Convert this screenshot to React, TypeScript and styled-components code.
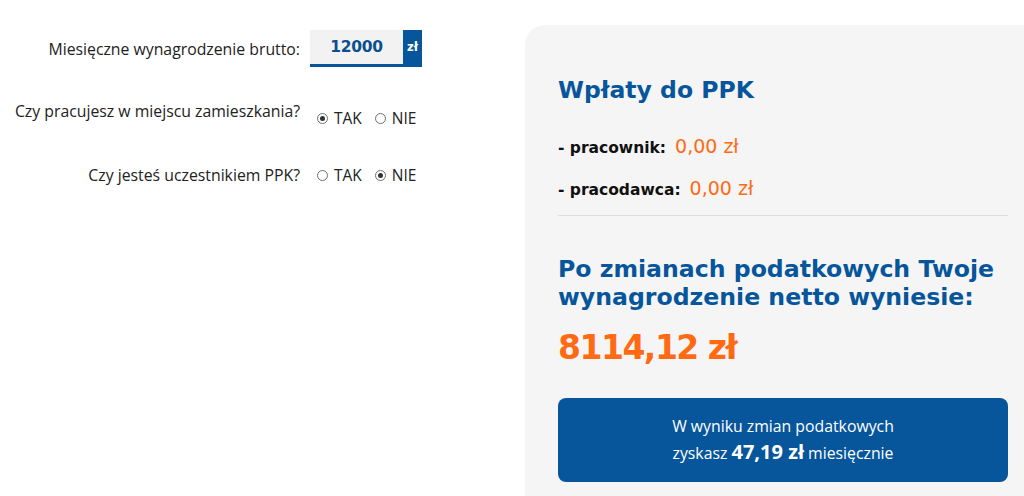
import { FunctionComponent } from "react"
import styled, { createGlobalStyle } from "styled-components"

const BLUE = "#07559b"
const ORANGE = "#ff6a13"
const HEAD_FONT = `"DejaVu Sans", "Noto Sans", sans-serif`
const BODY_FONT = `"Open Sans", "Noto Sans", sans-serif`

const GlobalStyle = createGlobalStyle`
  html, body {
    margin: 0;
    padding: 0;
    background: #ffffff;
    overflow: hidden;
  }
  body {
    font-family: ${BODY_FONT};
    color: #222;
  }
`

const StyledPage = styled.div`
  display: flex;
  width: 1024px;
  height: 496px;
  box-sizing: border-box;
  padding-top: 25px;
`

const StyledForm = styled.div`
  width: 525px;
  flex-shrink: 0;
  display: flex;
  flex-direction: column;
  padding-top: 5px;
`

const StyledRow = styled.div<{ $mt: number }>`
  display: flex;
  align-items: center;
  margin-top: ${(p) => p.$mt}px;
`

const StyledLabel = styled.div<{ $lift?: number }>`
  width: 300px;
  text-align: right;
  font-size: 15.8px;
  line-height: 24px;
  color: #222;
  padding-bottom: ${(p) => (p.$lift ? p.$lift * 2 : 0)}px;
`

const StyledInputWrap = styled.div`
  display: flex;
  margin-left: 10px;
  height: 37px;
  box-sizing: border-box;
  border-bottom: 3px solid ${BLUE};
`

const StyledInputValue = styled.div`
  width: 93px;
  background: #f2f2f2;
  display: flex;
  align-items: center;
  justify-content: center;
  font-family: ${HEAD_FONT};
  font-weight: 700;
  font-size: 15.5px;
  color: #0b4f8e;
  letter-spacing: -0.3px;
`

const StyledCurrency = styled.div`
  width: 19px;
  background: ${BLUE};
  color: #fff;
  display: flex;
  align-items: center;
  justify-content: center;
  font-family: ${HEAD_FONT};
  font-weight: 700;
  font-size: 11.5px;
`

const StyledRadioGroup = styled.div`
  display: flex;
  align-items: center;
  margin-left: 17px;
  gap: 13px;
`

const StyledRadioOption = styled.label`
  display: flex;
  align-items: center;
  gap: 6px;
  font-size: 15.5px;
  line-height: 24px;
  color: #222;
`

const StyledRadioDot = styled.span<{ $checked: boolean }>`
  width: 11px;
  height: 11px;
  box-sizing: border-box;
  border-radius: 50%;
  border: 1px solid #6f6f6f;
  background: #fff;
  display: inline-flex;
  align-items: center;
  justify-content: center;

  &::after {
    content: "";
    width: 5px;
    height: 5px;
    border-radius: 50%;
    background: ${(p) => (p.$checked ? "#333" : "transparent")};
  }
`

const StyledPanel = styled.div`
  flex: 1;
  background: #f5f5f5;
  border-top-left-radius: 20px;
  padding: 50px 16px 0 33px;
  display: flex;
  flex-direction: column;
`

const StyledTitle = styled.h2`
  margin: 0;
  font-family: ${HEAD_FONT};
  font-weight: 700;
  font-size: 23.5px;
  line-height: 30px;
  color: ${BLUE};
`

const StyledContribution = styled.div<{ $mt: number }>`
  margin-top: ${(p) => p.$mt}px;
  display: flex;
  align-items: baseline;
  gap: 9px;
  line-height: 24px;
`

const StyledContributionLabel = styled.span`
  font-family: ${HEAD_FONT};
  font-weight: 700;
  font-size: 15.5px;
  color: #111;
`

const StyledContributionValue = styled.span`
  font-family: ${HEAD_FONT};
  font-weight: 400;
  font-size: 19px;
  color: ${ORANGE};
`

const StyledDivider = styled.hr`
  margin: 13px 0 0;
  border: none;
  border-top: 1px solid #dcdcdc;
`

const StyledResultHeading = styled.h2`
  margin: 39px 0 0;
  font-family: ${HEAD_FONT};
  font-weight: 700;
  font-size: 23.6px;
  line-height: 28px;
  color: ${BLUE};
`

const StyledAmount = styled.div`
  margin-top: 15px;
  font-family: ${HEAD_FONT};
  font-weight: 700;
  font-size: 33px;
  line-height: 44px;
  color: ${ORANGE};
  letter-spacing: -1.5px;
`

const StyledInfoBox = styled.div`
  margin-top: 28px;
  background: ${BLUE};
  border-radius: 8px;
  padding: 15px 0 16px;
  text-align: center;
  color: #fff;
  font-size: 15.8px;
  line-height: 26px;

  strong {
    font-size: 20px;
    font-weight: 700;
  }
`

interface InterfaceRadioQuestion {
  label: string
  yes: boolean
  mt: number
  lift?: number
}

const RadioQuestion: FunctionComponent<InterfaceRadioQuestion> = ({ label, yes, mt, lift }) => {
  return (
    <StyledRow $mt={mt}>
      <StyledLabel $lift={lift}>{label}</StyledLabel>
      <StyledRadioGroup>
        <StyledRadioOption>
          <StyledRadioDot $checked={yes} />
          TAK
        </StyledRadioOption>
        <StyledRadioOption>
          <StyledRadioDot $checked={!yes} />
          NIE
        </StyledRadioOption>
      </StyledRadioGroup>
    </StyledRow>
  )
}

const App: FunctionComponent = () => {
  return (
    <StyledPage>
      <GlobalStyle />
      <StyledForm>
        <StyledRow $mt={0}>
          <StyledLabel>Miesięczne wynagrodzenie brutto:</StyledLabel>
          <StyledInputWrap>
            <StyledInputValue>12000</StyledInputValue>
            <StyledCurrency>zł</StyledCurrency>
          </StyledInputWrap>
        </StyledRow>
        <RadioQuestion label="Czy pracujesz w miejscu zamieszkania?" yes={true} mt={32} lift={7} />
        <RadioQuestion label="Czy jesteś uczestnikiem PPK?" yes={false} mt={26} />
      </StyledForm>
      <StyledPanel>
        <StyledTitle>Wpłaty do PPK</StyledTitle>
        <StyledContribution $mt={29}>
          <StyledContributionLabel>- pracownik:</StyledContributionLabel>
          <StyledContributionValue>0,00 zł</StyledContributionValue>
        </StyledContribution>
        <StyledContribution $mt={16}>
          <StyledContributionLabel>- pracodawca:</StyledContributionLabel>
          <StyledContributionValue>0,00 zł</StyledContributionValue>
        </StyledContribution>
        <StyledDivider />
        <StyledResultHeading>
          Po zmianach podatkowych Twoje
          <br />
          wynagrodzenie netto wyniesie:
        </StyledResultHeading>
        <StyledAmount>8114,12 zł</StyledAmount>
        <StyledInfoBox>
          W wyniku zmian podatkowych
          <br />
          zyskasz <strong>47,19 zł</strong> miesięcznie
        </StyledInfoBox>
      </StyledPanel>
    </StyledPage>
  )
}

export default App
